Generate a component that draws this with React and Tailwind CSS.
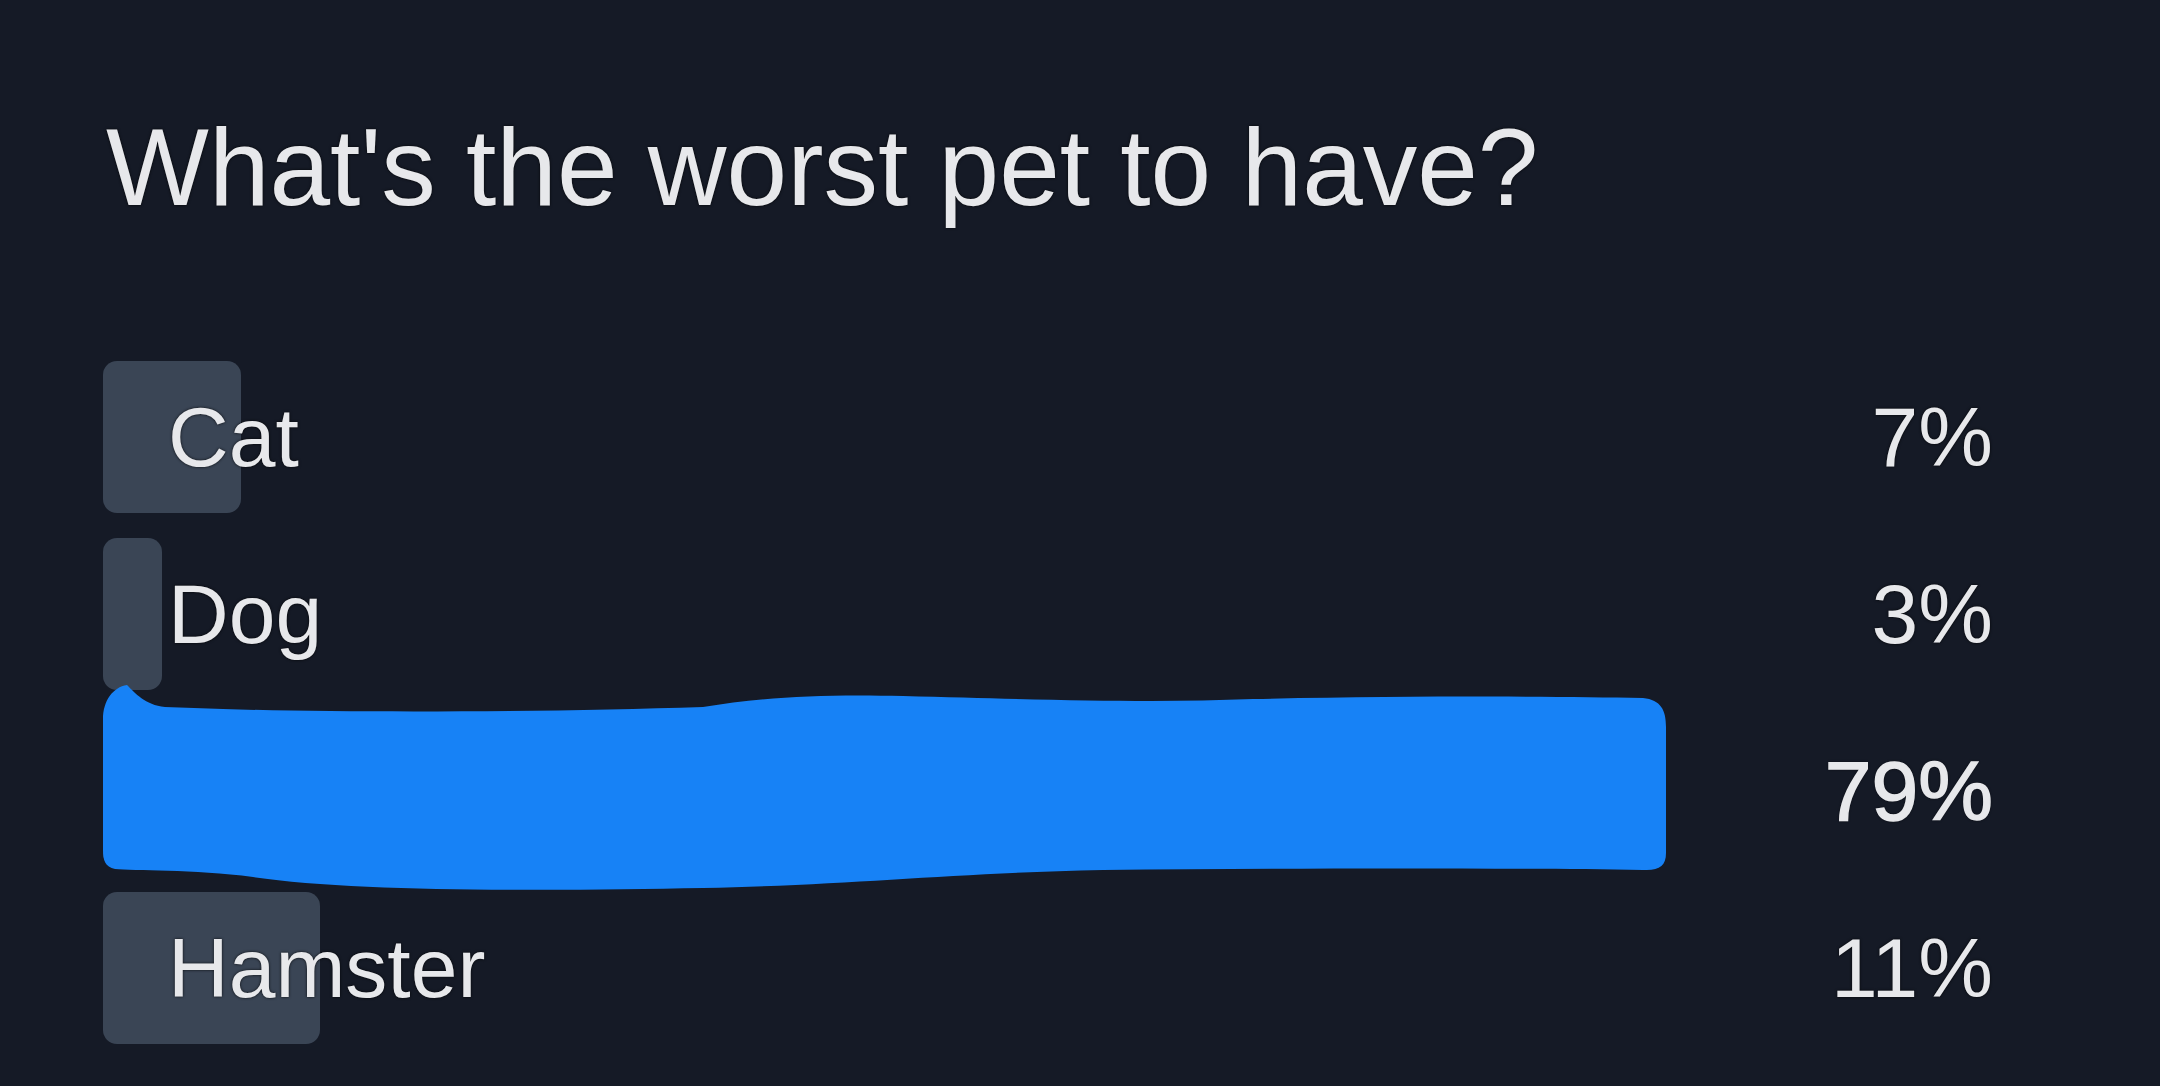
import React from "react";

const options = [
  { id: 1, label: "Cat", percent: 7 },
  { id: 2, label: "Dog", percent: 3 },
  { id: 3, label: "", percent: 79, hidden: true },
  { id: 4, label: "Hamster", percent: 11 },
];

// hand-drawn marker stroke that covers the leading answer
function Scribble() {
  return (
    <svg
      className="absolute left-0 top-[-30px] z-20"
      width="1566"
      height="212"
      viewBox="0 0 1566 212"
    >
      <path
        d="M0,34 C0,16 10,2 24,0 C32,8 42,20 62,22 L120,24 C250,28 450,27 600,22 C660,12 720,9 800,11 C950,15 1050,18 1150,14 C1300,11 1450,11 1540,13 C1558,15 1563,25 1563,42 L1563,168 C1563,181 1556,186 1540,185 C1400,183 1200,183 1000,185 C850,188 750,200 600,203 C450,206 250,207 150,192 C90,184 30,186 12,184 C2,182 0,175 0,165 Z"
        fill="#1782f6"
      />
    </svg>
  );
}

function PollRow({ option }) {
  return (
    <div className="relative h-[152px] flex items-center justify-between pl-[65px] pr-[80px]">
      <div
        className="absolute inset-y-0 left-0 rounded-[14px] bg-[#3a4555]"
        style={{ width: `${option.percent}%` }}
      />
      {option.hidden && <Scribble />}
      <span className="relative z-10 text-[84px] leading-none text-[#e7e8eb] [text-shadow:0_0_3px_rgba(0,0,0,0.85)]">
        {option.label}
      </span>
      <span
        className={`relative z-10 text-[84px] leading-none text-[#e7e8eb] [text-shadow:0_0_3px_rgba(0,0,0,0.85)] ${
          option.hidden ? "[-webkit-text-stroke:1.5px_#e7e8eb]" : ""
        }`}
      >
        {option.percent}%
      </span>
    </div>
  );
}

export default function App() {
  return (
    <div
      className="w-[2160px] h-[1086px] overflow-hidden bg-[#151a26] pl-[103px] pr-[87px] pt-[113px]"
      style={{ fontFamily: '"Liberation Sans", Arial, sans-serif' }}
    >
      <h1 className="pl-[3px] text-[109px] leading-none text-[#e7e8eb] [text-shadow:0_0_3px_rgba(0,0,0,0.85)]">
        What's the worst pet to have?
      </h1>
      <div className="mt-[139px] flex flex-col gap-[25px]">
        {options.map((option) => (
          <PollRow key={option.id} option={option} />
        ))}
      </div>
    </div>
  );
}
